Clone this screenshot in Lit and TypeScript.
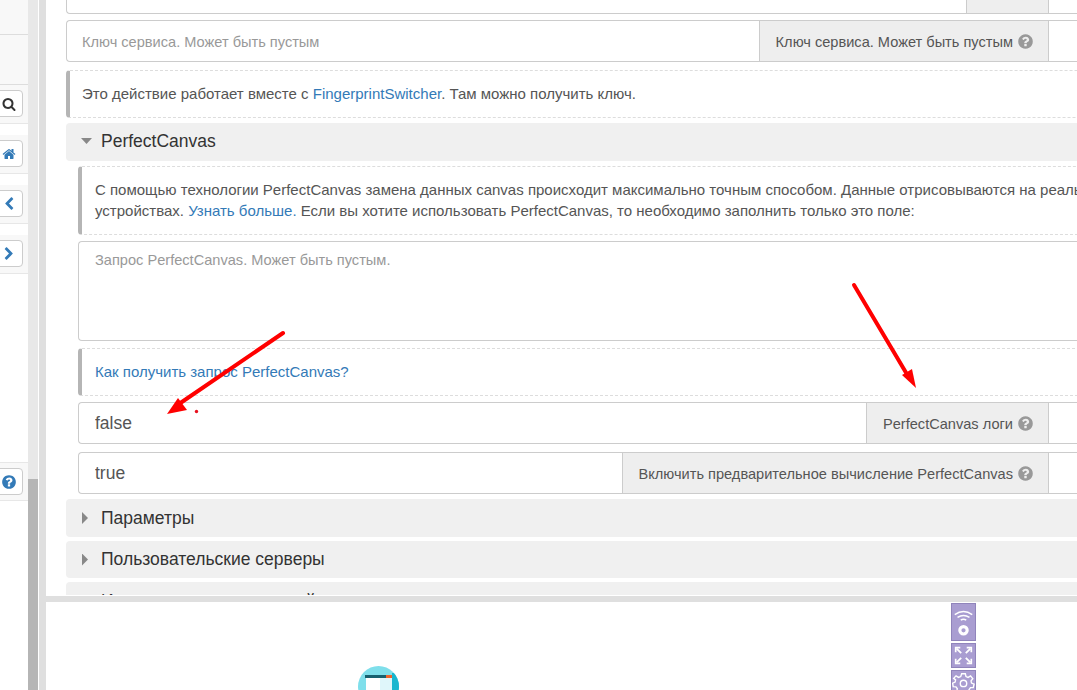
import {LitElement, css, html, svg} from 'lit';
import {customElement} from 'lit/decorators.js';

const ICONS: Record<string, string> = {
  search:
    'M1216 832q0-185-131.500-316.500t-316.500-131.500-316.500 131.500-131.500 316.500 131.500 316.500 316.500 131.500 316.500-131.500 131.500-316.500zm512 832q0 52-38 90t-90 38q-54 0-90-38l-343-342q-179 124-399 124-143 0-273.500-55.500t-225-150-150-225-55.500-273.500 55.500-273.500 150-225 225-150 273.500-55.500 273.500 55.500 225 150 150 225 55.500 273.500q0 220-124 399l343 343q37 37 37 90z',
  home:
    'M1472 992v480q0 26-19 45t-45 19h-384v-384h-256v384h-384q-26 0-45-19t-19-45v-480q0-1 .5-3t.5-3l575-474 575 474q1 2 1 6zm223-69l-62 74q-8 9-21 11h-3q-13 0-21-7l-692-577-692 577q-12 8-24 7-13-2-21-11l-62-74q-8-10-7-23.500t11-21.500l719-599q32-26 76-26t76 26l244 204v-195q0-14 9-23t23-9h192q14 0 23 9t9 23v408l219 182q10 8 11 21.500t-7 23.500z',
  left:
    'M1427 301l-531 531 531 531q19 19 19 45t-19 45l-166 166q-19 19-45 19t-45-19l-742-742q-19-19-19-45t19-45l742-742q19-19 45-19t45 19l166 166q19 19 19 45t-19 45z',
  right:
    'M1363 877l-742 742q-19 19-45 19t-45-19l-166-166q-19-19-19-45t19-45l531-531-531-531q-19-19-19-45t19-45l166-166q19-19 45-19t45 19l742 742q19 19 19 45t-19 45z',
  help:
    'M1024 1376v-192q0-14-9-23t-23-9h-192q-14 0-23 9t-9 23v192q0 14 9 23t23 9h192q14 0 23-9t9-23zm256-672q0-88-55.500-163t-138.500-116-170-41q-243 0-371 213-15 24 8 42l132 100q7 6 19 6 16 0 25-12 53-68 86-92 34-24 86-24 48 0 85.500 26t37.500 59q0 38-20 61t-68 45q-63 28-115.500 86.500t-52.500 125.500v36q0 14 9 23t23 9h192q14 0 23-9t9-23q0-19 21.500-49.500t54.500-49.500q32-18 49-28.500t46-35 44.500-48 28-60.500 12.500-81zm384 192q0 209-103 385.500t-279.500 279.500-385.500 103-385.500-103-279.500-279.500-103-385.500 103-385.500 279.500-279.500 385.500-103 385.500 103 279.500 279.500 103 385.500z',
};

const icon = (name: string, cls: string) => html`<svg class=${cls} viewBox="0 0 1792 1792">
  ${svg`<path fill="currentColor" d=${ICONS[name]}></path>`}
</svg>`;

@customElement('app-root')
export class AppRoot extends LitElement {
  static styles = css`
    :host {
      display: block;
      width: 1077px;
      height: 690px;
      overflow: hidden;
      position: relative;
      background: #fff;
      font-family: 'Liberation Sans', Arial, sans-serif;
      font-size: 14.6px;
      color: #555;
    }

    .shell {
      display: flex;
      height: 690px;
    }

    /* левая панель с кнопками */
    .sidebar {
      width: 28px;
      flex: none;
      overflow: hidden;
    }
    .band {
      height: 34px;
      background: #f8f8f8;
      border-bottom: 1px solid #ddd;
    }
    .band.tall {
      height: 49px;
    }
    .tool-row {
      height: 39px;
      padding-top: 5px;
      box-sizing: border-box;
      background: #f8f8f8;
      border-bottom: 1px solid #e7e7e7;
      margin-bottom: 11px;
    }
    .tool-row.last {
      margin-top: 188px;
      border-top: 1px solid #e7e7e7;
    }
    .tool {
      display: flex;
      align-items: center;
      justify-content: center;
      width: 32px;
      height: 27px;
      margin-left: -9px;
      box-sizing: border-box;
      background: #fff;
      border: 1px solid #ccc;
      border-radius: 4px;
      color: #337ab7;
    }
    .tool.dark {
      color: #333;
    }
    .tool svg {
      width: 14px;
      height: 14px;
      margin-left: 3px;
    }
    .tool .big {
      width: 16px;
      height: 16px;
    }

    .scrollbar {
      width: 10px;
      flex: none;
      display: flex;
      flex-direction: column;
      background: #e8e8e8;
    }
    .scrollbar i {
      display: block;
      margin-top: 479px;
      flex: 1;
      background: #b5b5b5;
    }
    .gutter {
      width: 7px;
      flex: none;
      margin-left: 1px;
      background: #dfdfdf;
    }

    .main {
      flex: 1;
      min-width: 0;
      display: flex;
      flex-direction: column;
    }
    .panel {
      height: 595px;
      flex: none;
      overflow: hidden;
      padding-left: 20px;
    }
    .content {
      width: 1040px;
      margin-top: -28px;
    }
    .splitter {
      height: 6px;
      flex: none;
      margin-top: 1px;
      background: #dfdfdf;
    }

    /* поля формы */
    .group {
      display: flex;
      height: 42px;
      box-sizing: border-box;
      border: 1px solid #ccc;
      border-right: 0;
      border-radius: 4px 0 0 4px;
    }
    .group input {
      flex: 1;
      min-width: 0;
      border: 0;
      outline: 0;
      padding: 0 16px;
      background: transparent;
      font: inherit;
      color: #555;
    }
    .group input.flush {
      padding: 1px 15px 0;
    }
    .group input.value {
      font-size: 17.5px;
    }
    input::placeholder,
    textarea::placeholder {
      color: #999;
      opacity: 1;
    }
    .addon {
      display: flex;
      align-items: center;
      gap: 4px;
      flex: none;
      padding: 1px 14px 0 16px;
      background: #eee;
      border-left: 1px solid #ccc;
      border-right: 1px solid #ccc;
      white-space: nowrap;
    }
    .addon.blank {
      width: 51px;
    }
    .addon svg {
      width: 17px;
      height: 17px;
      color: #999;
    }
    .tail {
      width: 57px;
      flex: none;
    }

    textarea {
      display: block;
      width: 100%;
      height: 100px;
      box-sizing: border-box;
      margin-top: 6px;
      padding: 8px 16px;
      border: 1px solid #ccc;
      border-right: 0;
      border-radius: 4px 0 0 4px;
      outline: 0;
      resize: none;
      font: inherit;
      line-height: 20px;
    }

    .note {
      box-sizing: border-box;
      padding: 12px 12px 13px;
      border: 1px dashed #ddd;
      border-left: 4px solid #b5b5b5;
      border-right: 0;
      border-radius: 4px 0 0 4px;
      font-size: 15px;
      line-height: 21px;
      white-space: nowrap;
    }
    .body .note {
      padding-left: 13px;
    }
    a {
      color: #337ab7;
      text-decoration: none;
    }

    .head {
      display: flex;
      align-items: center;
      height: 38px;
      box-sizing: border-box;
      padding-left: 15px;
      background: #f0f0f0;
      border-radius: 4px 0 0 4px;
      font-size: 17.5px;
      color: #333;
    }
    .head.raised {
      padding-bottom: 2px;
    }
    .caret {
      flex: none;
      background: #888;
    }
    .caret.open {
      width: 11px;
      height: 6px;
      margin-right: 9px;
      clip-path: polygon(0 0, 100% 0, 50% 100%);
    }
    .caret.closed {
      width: 6px;
      height: 12px;
      margin: 0 13px 0 1px;
      clip-path: polygon(0 0, 100% 50%, 0 100%);
    }

    .body {
      padding-left: 12px;
    }

    .mt4 { margin-top: 4px; }
    .mt5 { margin-top: 5px; }
    .mt6 { margin-top: 6px; }
    .mt7 { margin-top: 7px; }
    .mt8 { margin-top: 8px; }
    .short { height: 37px; }

    /* нижняя панель */
    .bottom {
      flex: 1;
      min-height: 0;
      overflow: hidden;
      display: flex;
      align-items: flex-start;
    }
    .logo {
      width: 41px;
      height: 41px;
      flex: none;
      margin: 64px 0 0 312px;
      display: block;
    }
    .stack {
      display: flex;
      flex-direction: column;
      gap: 2px;
      margin: 1px 0 0 552px;
      flex: none;
    }
    .tile {
      width: 25px;
      height: 25px;
      box-sizing: border-box;
      background: #a99dd1;
      border: 1px solid #9084bb;
      display: block;
    }
    .tile.high {
      height: 38px;
    }

    /* стрелки поверх скриншота */
    .marks {
      position: absolute;
      inset: 0;
      width: 1077px;
      height: 690px;
      pointer-events: none;
    }
  `;

  render() {
    const key = 'Ключ сервиса. Может быть пустым';
    return html`
      <div class="shell">
        <div class="sidebar">
          <div class="band"></div>
          <div class="band tall"></div>
          <div class="tool-row"><div class="tool dark">${icon('search', '')}</div></div>
          <div class="tool-row"><div class="tool">${icon('home', '')}</div></div>
          <div class="tool-row"><div class="tool">${icon('left', '')}</div></div>
          <div class="tool-row"><div class="tool">${icon('right', '')}</div></div>
          <div class="tool-row last"><div class="tool">${icon('help', 'big')}</div></div>
        </div>
        <div class="scrollbar"><i></i></div>
        <div class="gutter"></div>
        <div class="main">
          <div class="panel">
            <div class="content">
              <div class="group">
                <input class="flush" />
                <div class="addon blank"></div>
                <div class="tail"></div>
              </div>
              <div class="group mt6">
                <input class="flush" placeholder=${key} />
                <div class="addon">${key} ${icon('help', '')}</div>
                <div class="tail"></div>
              </div>
              <div class="note mt8">
                Это действие работает вместе с <a>FingerprintSwitcher</a>. Там можно получить ключ.
              </div>
              <div class="head raised mt5"><span class="caret open"></span>PerfectCanvas</div>
              <div class="body">
                <div class="note mt5">
                  С помощью технологии PerfectCanvas замена данных canvas происходит максимально точным
                  способом. Данные отрисовываются на реальных<br />устройствах.
                  <a>Узнать больше.</a> Если вы хотите использовать PerfectCanvas, то необходимо заполнить
                  только это поле:
                </div>
                <textarea placeholder="Запрос PerfectCanvas. Может быть пустым."></textarea>
                <div class="note mt7"><a>Как получить запрос PerfectCanvas?</a></div>
                <div class="group mt6">
                  <input class="value" .value=${'false'} />
                  <div class="addon">PerfectCanvas логи ${icon('help', '')}</div>
                  <div class="tail"></div>
                </div>
                <div class="group mt8">
                  <input class="value" .value=${'true'} />
                  <div class="addon">Включить предварительное вычисление PerfectCanvas ${icon('help', '')}</div>
                  <div class="tail"></div>
                </div>
              </div>
              <div class="head mt5"><span class="caret closed"></span>Параметры</div>
              <div class="head mt4 short"><span class="caret closed"></span>Пользовательские серверы</div>
              <div class="head mt4"><span class="caret closed"></span>Использование сторонней</div>
            </div>
          </div>
          <div class="splitter"></div>
          <div class="bottom">
            <svg class="logo" viewBox="0 0 41 41">
              <defs>
                <clipPath id="logo-round"><circle cx="20.5" cy="20.5" r="20.5"></circle></clipPath>
              </defs>
              <g clip-path="url(#logo-round)">
                <rect width="41" height="41" fill="#7fdfeb"></rect>
                <rect x="34" y="7" width="7" height="34" fill="#19b6cf"></rect>
                <rect x="8" y="12" width="26" height="29" fill="#fff"></rect>
                <rect x="22" y="12" width="12" height="29" fill="#dff6fa"></rect>
                <rect x="7" y="9" width="21" height="3" fill="#17606f"></rect>
                <rect x="28" y="9" width="6" height="3" fill="#f0642c"></rect>
              </g>
            </svg>
            <div class="stack">
              <svg class="tile high" viewBox="0 0 25 38" fill="none" stroke="#fff">
                <path d="M3 11q9.500-7 19 0M6 14q6.500-4 13 0M9.500 17q3-2 6 0" stroke-width="1.600"></path>
                <circle cx="12.500" cy="28" r="4" stroke-width="3.400"></circle>
              </svg>
              <svg class="tile" viewBox="0 0 25 25" fill="none" stroke="#fff" stroke-width="2">
                <path d="M5 5l5 5M20 5l-5 5M5 20l5-5M20 20l-5-5"></path>
                <path d="M4 9V4h5M16 4h5v5M4 16v5h5M21 16v5h-5" stroke-width="1.800"></path>
              </svg>
              <svg class="tile" viewBox="0 0 25 25" fill="none" stroke="#fff" stroke-width="1.500">
                <path d="M10.500 3h4l.7 3 2.300 1 2.700-1.600 2.400 2.900-1.900 2.400.5 2.400 2.800 1.200-.9 3.700-3 .1-1.500 2-1 3-3.600 1-1.500-2.600h-2.400L8.500 24l-3.400-1.700.7-3-1.500-2-3 -.3-.6-3.700 2.700-1.300.5-2.400L1.800 8l2.600-2.700L7.100 7l2.400-1z"></path>
                <circle cx="12.500" cy="13.500" r="3.500"></circle>
              </svg>
            </div>
          </div>
        </div>
      </div>
      <svg class="marks" viewBox="0 0 1077 690">
        <path d="M283 333L176 406" stroke="#f00" stroke-width="4" stroke-linecap="round"></path>
        <path d="M167 414L178 398L187 410Z" fill="#f00"></path>
        <circle cx="196.500" cy="411.500" r="1.700" fill="#e8101e"></circle>
        <path d="M854 285L908 376" stroke="#f00" stroke-width="4" stroke-linecap="round"></path>
        <path d="M916 388L902 375L912 369Z" fill="#f00"></path>
      </svg>
    `;
  }
}
